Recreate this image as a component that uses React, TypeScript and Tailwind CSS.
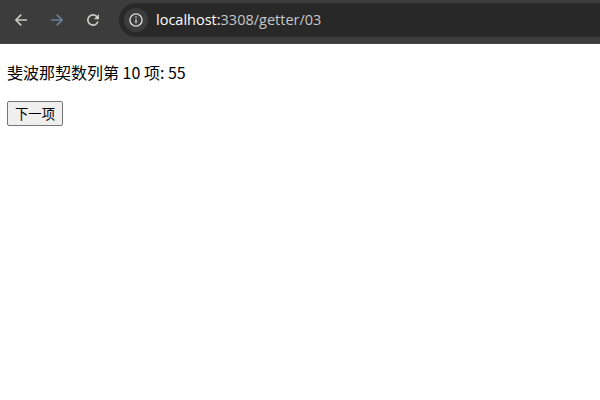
import { useState } from "react";

function BackIcon() {
  return (
    <svg width="12" height="12" viewBox="0 0 12 12" fill="none" stroke="#cbcac5" strokeWidth="1.6">
      <path d="M12 6H1M6.2 .6L.9 6l5.3 5.4" />
    </svg>
  );
}

function ForwardIcon() {
  return (
    <svg width="12" height="12" viewBox="0 0 12 12" fill="none" stroke="#688096" strokeWidth="1.6">
      <path d="M0 6h11M5.8 .6L11.1 6l-5.3 5.4" />
    </svg>
  );
}

function ReloadIcon() {
  return (
    <svg width="12" height="12" viewBox="0 0 12 12" fill="none">
      <path d="M10.9 7.4A5.1 5.1 0 1 1 9.6 2.4L10.7 3.6" stroke="#cbcac5" strokeWidth="1.7" />
      <path d="M12 0v5.2H6.8z" fill="#cbcac5" />
    </svg>
  );
}

function InfoIcon() {
  return (
    <svg width="14" height="14" viewBox="0 0 14 14" fill="none" stroke="#d8d8d8">
      <circle cx="7" cy="7" r="6.1" strokeWidth="1.4" />
      <path d="M7 6.2v4M7 3.6v1.5" strokeWidth="1.4" />
    </svg>
  );
}

function fib(n: number) {
  let a = 0;
  let b = 1;
  for (let i = 0; i < n; i++) [a, b] = [b, a + b];
  return a;
}

export default function App() {
  const [n, setN] = useState(10);
  return (
    <div className="flex h-[400px] w-[600px] flex-col overflow-hidden bg-white">
      <header className="flex h-11 border-b border-[#484346] bg-[#3c3c3c] pt-[3px]">
        <nav className="flex h-[34px] items-center gap-6 pl-[15px]">
          <button aria-label="Back"><BackIcon /></button>
          <button aria-label="Forward"><ForwardIcon /></button>
          <button aria-label="Reload"><ReloadIcon /></button>
        </nav>
        <div className="ml-5 flex h-[34px] flex-1 items-center rounded-l-full bg-[#282828] pl-[5px]">
          <span className="flex size-6 items-center justify-center rounded-full bg-[#3c3c3c]">
            <InfoIcon />
          </span>
          <span className="ml-2 whitespace-nowrap font-['Open_Sans','Noto_Sans',sans-serif] text-[14.5px] leading-5 text-[#c7c7c7]">
            <span className="text-white">localhost:</span>3308/getter/03
          </span>
        </div>
      </header>
      <main className="flex flex-col items-start px-[7px] pt-4 font-['Noto_Sans_CJK_SC',sans-serif] text-black">
        <p className="h-6 text-base leading-6">
          斐波那契数列第 {n} 项: {fib(n)}
        </p>
        <button
          onClick={() => setN(n + 1)}
          className="mt-[17px] flex h-[25px] w-14 items-center justify-center rounded-[2px] border border-[#767676] bg-[#efefef] text-[13.333px] leading-5"
        >
          下一项
        </button>
      </main>
    </div>
  );
}
